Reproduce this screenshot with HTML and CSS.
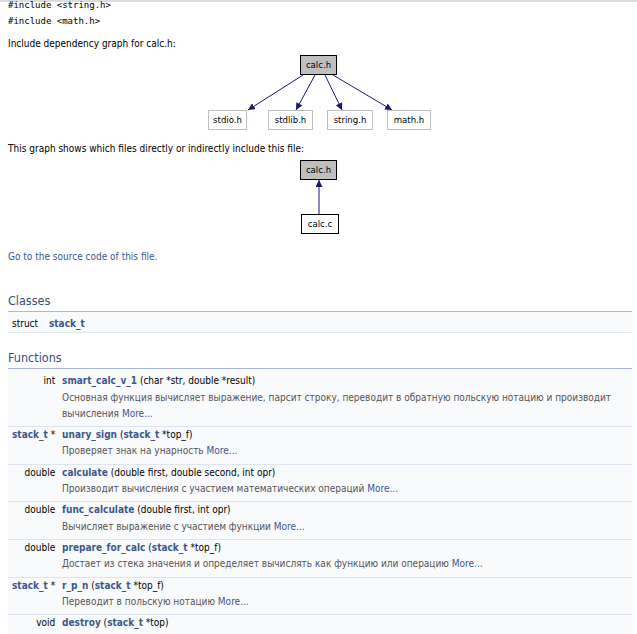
FILE: index.html
```html
<!DOCTYPE html>
<html>
<head>
<meta charset="utf-8">
<title>calc.h File Reference</title>
<link rel="stylesheet" href="styles.css">
</head>
<body>
<div class="topbar"></div>
<div class="contents">
  <div class="fragment">
    <div class="line">#include &lt;string.h&gt;</div>
    <div class="line">#include &lt;math.h&gt;</div>
  </div>
  <p class="para p-graph1">Include dependency graph for calc.h:</p>
  <div class="dyncontent">
    <svg class="graph graph1" width="240" height="82" viewBox="0 0 240 82">
      <defs>
        <marker id="ah" viewBox="0 0 10 10" refX="10" refY="5" markerWidth="7" markerHeight="7" orient="auto">
          <path d="M0,0 L10,5 L0,10 z" fill="#191970"/>
        </marker>
      </defs>
      <rect x="100.5" y="3.5" width="36" height="19" fill="#bfbfbf" stroke="#000"/>
      <text x="118.5" y="16" class="gt">calc.h</text>
      <line x1="103" y1="23" x2="48" y2="58" stroke="#191970" marker-end="url(#ah)"/>
      <line x1="115" y1="23" x2="96" y2="58" stroke="#191970" marker-end="url(#ah)"/>
      <line x1="125" y1="23" x2="142" y2="58" stroke="#191970" marker-end="url(#ah)"/>
      <line x1="133" y1="23" x2="192" y2="58" stroke="#191970" marker-end="url(#ah)"/>
      <rect x="8.5" y="58.5" width="38" height="19" fill="#fff" stroke="#bfbfbf"/>
      <text x="27.5" y="71" class="gt">stdio.h</text>
      <rect x="68.5" y="58.5" width="44" height="19" fill="#fff" stroke="#bfbfbf"/>
      <text x="90.5" y="71" class="gt">stdlib.h</text>
      <rect x="127.5" y="58.5" width="45" height="19" fill="#fff" stroke="#bfbfbf"/>
      <text x="150" y="71" class="gt">string.h</text>
      <rect x="187.5" y="58.5" width="43" height="19" fill="#fff" stroke="#bfbfbf"/>
      <text x="209" y="71" class="gt">math.h</text>
    </svg>
  </div>
  <p class="para p-graph2">This graph shows which files directly or indirectly include this file:</p>
  <div class="dyncontent">
    <svg class="graph graph2" width="240" height="80" viewBox="0 0 240 80">
      <defs>
        <marker id="ah2" viewBox="0 0 10 10" refX="10" refY="5" markerWidth="7" markerHeight="7" orient="auto">
          <path d="M0,0 L10,5 L0,10 z" fill="#191970"/>
        </marker>
      </defs>
      <rect x="100.5" y="3.5" width="36" height="19" fill="#bfbfbf" stroke="#000"/>
      <text x="118.5" y="16" class="gt">calc.h</text>
      <line x1="119" y1="57" x2="119" y2="23" stroke="#191970" marker-end="url(#ah2)"/>
      <rect x="101.5" y="57.5" width="37" height="19" fill="#fff" stroke="#000"/>
      <text x="120" y="70" class="gt">calc.c</text>
    </svg>
  </div>
  <p class="para p-source"><a class="link" href="#">Go to the source code of this file.</a></p>

  <h2 class="groupheader gh-classes">Classes</h2>
  <table class="memberdecls">
    <tr class="memitem first"><td class="left">struct&#160;</td><td class="right cls-right"><a class="el" href="#">stack_t</a></td></tr>
    <tr class="separator"><td colspan="2"></td></tr>
  </table>

  <h2 class="groupheader gh-functions">Functions</h2>
  <table class="memberdecls">
    <tr class="memitem first"><td class="left">int&#160;</td><td class="right"><a class="el" href="#">smart_calc_v_1</a> (char *str, double *result)</td></tr>
    <tr class="memdesc"><td class="left"></td><td class="desc">Основная функция вычисляет выражение, парсит строку, переводит в обратную польскую нотацию и производит вычисления <a class="link" href="#">More...</a></td></tr>
    <tr class="separator"><td colspan="2"></td></tr>

    <tr class="memitem"><td class="left"><a class="el" href="#">stack_t</a> *&#160;</td><td class="right"><a class="el" href="#">unary_sign</a> (<a class="el" href="#">stack_t</a> *top_f)</td></tr>
    <tr class="memdesc"><td class="left"></td><td class="desc">Проверяет знак на унарность <a class="link" href="#">More...</a></td></tr>
    <tr class="separator"><td colspan="2"></td></tr>

    <tr class="memitem"><td class="left">double&#160;</td><td class="right"><a class="el" href="#">calculate</a> (double first, double second, int opr)</td></tr>
    <tr class="memdesc"><td class="left"></td><td class="desc">Производит вычисления с участием математических операций <a class="link" href="#">More...</a></td></tr>
    <tr class="separator"><td colspan="2"></td></tr>

    <tr class="memitem"><td class="left">double&#160;</td><td class="right"><a class="el" href="#">func_calculate</a> (double first, int opr)</td></tr>
    <tr class="memdesc"><td class="left"></td><td class="desc">Вычисляет выражение с участием функции <a class="link" href="#">More...</a></td></tr>
    <tr class="separator"><td colspan="2"></td></tr>

    <tr class="memitem"><td class="left">double&#160;</td><td class="right"><a class="el" href="#">prepare_for_calc</a> (<a class="el" href="#">stack_t</a> *top_f)</td></tr>
    <tr class="memdesc"><td class="left"></td><td class="desc">Достает из стека значения и определяет вычислять как функцию или операцию <a class="link" href="#">More...</a></td></tr>
    <tr class="separator"><td colspan="2"></td></tr>

    <tr class="memitem"><td class="left"><a class="el" href="#">stack_t</a> *&#160;</td><td class="right"><a class="el" href="#">r_p_n</a> (<a class="el" href="#">stack_t</a> *top_f)</td></tr>
    <tr class="memdesc"><td class="left"></td><td class="desc">Переводит в польскую нотацию <a class="link" href="#">More...</a></td></tr>
    <tr class="separator"><td colspan="2"></td></tr>

    <tr class="memitem"><td class="left">void&#160;</td><td class="right"><a class="el" href="#">destroy</a> (<a class="el" href="#">stack_t</a> *top)</td></tr>
    <tr class="memdesc"><td class="left"></td><td class="desc"></td></tr>
    <tr class="separator"><td colspan="2"></td></tr>
  </table>
</div>
</body>
</html>
```
FILE: styles.css
```css
html, body {
  margin: 0;
  padding: 0;
  background: #ffffff;
}

body {
  font-family: "DejaVu Sans Condensed", "DejaVu Sans", sans-serif;
  font-stretch: condensed;
  font-size: 10px;
  color: #000000;
  overflow: hidden;
}

.topbar {
  height: 2px;
  background: #dcdcdc;
}

.contents {
  padding: 0 5px 0 8px;
}

.fragment {
  margin-top: -5px;
  font-family: "DejaVu Sans Mono", monospace;
  font-stretch: normal;
  font-size: 9px;
  line-height: 16px;
}

.line {
  white-space: pre;
}

.para {
  margin: 0;
  line-height: 16px;
}

.p-graph1 { margin-top: 7px; }
.p-graph2 { margin-top: 7px; }
.p-source { margin-top: 12px; }

.dyncontent {
  display: flex;
  justify-content: center;
}

.graph {
  display: block;
}

.gt {
  font-family: "DejaVu Sans Condensed", "DejaVu Sans", sans-serif;
  font-stretch: condensed;
  font-size: 9.5px;
  text-anchor: middle;
  fill: #000;
}

a.link {
  color: #3d578c;
  text-decoration: none;
}

a.el {
  color: #3d578c;
  font-weight: bold;
  text-decoration: none;
}

.groupheader {
  margin: 0;
  font-size: 12.5px;
  font-weight: normal;
  line-height: 20px;
  color: #354c7b;
  border-bottom: 1px solid #a8b8d9;
}

.gh-classes { margin-top: 26px; }
.gh-functions { margin-top: 15px; }

.memberdecls {
  width: 100%;
  border-collapse: collapse;
  border-spacing: 0;
}

.memberdecls td {
  padding: 0;
  line-height: 16.3px;
  vertical-align: top;
}

.memitem td,
.memdesc td {
  background: #f9fafc;
}

.memitem.first td {
  padding-top: 4px;
}

.left {
  text-align: right;
  white-space: nowrap;
  width: 1%;
  padding-left: 4px !important;
}

.right {
  padding-left: 4px !important;
  white-space: nowrap;
}

.cls-right {
  padding-left: 8px !important;
}

.desc {
  color: #555555;
  padding: 0 8px 4px 4px !important;
}

.separator td {
  height: 0;
  line-height: 0;
  border-bottom: 1px solid #dee4f0;
}
```
